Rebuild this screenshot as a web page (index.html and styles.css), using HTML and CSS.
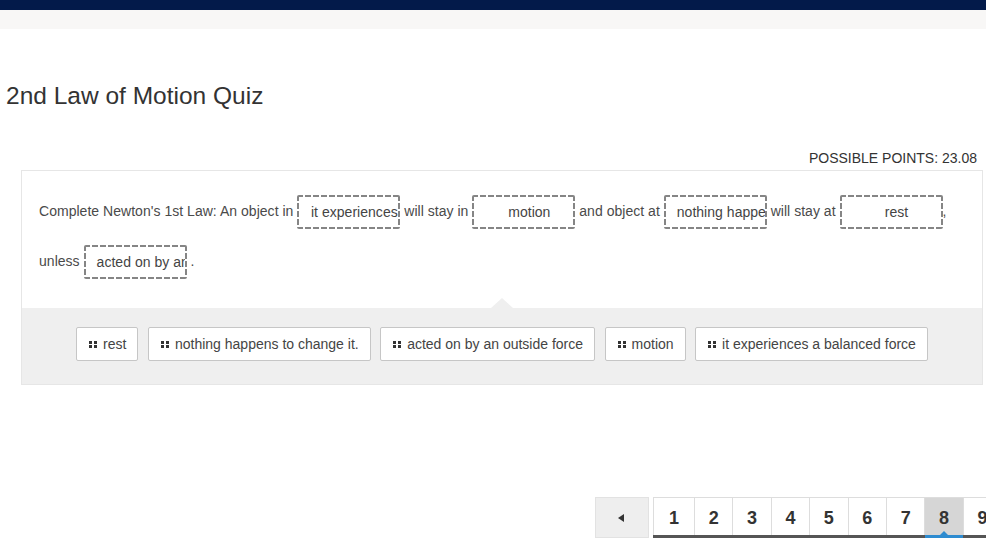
FILE: index.html
```html
<!DOCTYPE html>
<html lang="en">
<head>
<meta charset="utf-8">
<title>2nd Law of Motion Quiz</title>
<link rel="stylesheet" href="styles.css">
</head>
<body>
<div class="topbar"></div>
<div class="subbar"></div>
<main class="page">
  <h1 class="title">2nd Law of Motion Quiz</h1>
  <div class="points">POSSIBLE POINTS: 23.08</div>
  <section class="question">
    <div class="prompt">Complete Newton's 1st Law: An object in <span class="drop">it experiences</span> will stay in <span class="drop">motion</span> and object at <span class="drop">nothing happens to change it.</span> will stay at <span class="drop">rest</span>, unless <span class="drop">acted on by an outside force</span> .</div>
    <div class="bank">
      <div class="chip"><span class="grip"></span>rest</div>
      <div class="chip"><span class="grip"></span>nothing happens to change it.</div>
      <div class="chip"><span class="grip"></span>acted on by an outside force</div>
      <div class="chip"><span class="grip"></span>motion</div>
      <div class="chip"><span class="grip"></span>it experiences a balanced force</div>
    </div>
  </section>
  <nav class="pager">
    <button class="prev" type="button" aria-label="Previous"><span class="prev-arrow"></span></button>
    <ol class="pages">
      <li class="pg">1</li>
      <li class="pg">2</li>
      <li class="pg">3</li>
      <li class="pg">4</li>
      <li class="pg">5</li>
      <li class="pg">6</li>
      <li class="pg">7</li>
      <li class="pg current">8</li>
      <li class="pg">9</li>
      <li class="pg">10</li>
    </ol>
  </nav>
</main>
</body>
</html>
```

FILE: styles.css
```css
html, body {
  margin: 0;
  padding: 0;
  background: #ffffff;
  overflow: hidden;
}
body {
  font-family: "Liberation Sans", Arial, Helvetica, sans-serif;
  color: #333333;
  width: 986px;
}
.topbar {
  height: 10px;
  background: #031a4a;
}
.subbar {
  height: 19px;
  background: #f8f7f6;
}
.page {
  display: block;
}
.title {
  margin: 52px 0 0 0;
  padding-left: 6px;
  font-size: 24.5px;
  line-height: 29px;
  font-weight: normal;
  color: #333333;
}
.points {
  margin-top: 40px;
  padding-right: 9px;
  text-align: right;
  font-size: 14px;
  line-height: 16px;
  color: #333333;
}
.question {
  position: relative;
  margin: 4px 3px 0 21px;
  border: 1px solid #e6e6e6;
  background: #ffffff;
}
.prompt {
  padding: 15px 17px 22px 17px;
  font-size: 14px;
  line-height: 50px;
  letter-spacing: 0.03px;
  color: #4a4a4a;
}
.drop {
  display: inline-block;
  box-sizing: border-box;
  width: 103px;
  height: 34px;
  border: 2px solid transparent;
  border-radius: 2px;
  padding: 0 0 0 11px;
  vertical-align: middle;
  text-align: center;
  white-space: nowrap;
  overflow: hidden;
  line-height: 30px;
  color: #444444;
  background:
    repeating-linear-gradient(90deg, #858585 0 6px, transparent 6px 8px) left top / 100% 2px no-repeat border-box,
    repeating-linear-gradient(90deg, #858585 0 6px, transparent 6px 8px) left bottom / 100% 2px no-repeat border-box,
    repeating-linear-gradient(180deg, #858585 0 6px, transparent 6px 8px) left top / 2px 100% no-repeat border-box,
    repeating-linear-gradient(180deg, #858585 0 6px, transparent 6px 8px) right top / 2px 100% no-repeat border-box,
    #ffffff;
}
.bank {
  position: relative;
  display: flex;
  justify-content: center;
  gap: 9.5px;
  padding: 19px 0 23px 0;
  background: #efefef;
}
.bank::before {
  content: "";
  position: absolute;
  left: 50%;
  top: -10px;
  margin-left: -11px;
  border-left: 11px solid transparent;
  border-right: 11px solid transparent;
  border-bottom: 10px solid #efefef;
}
.chip {
  display: flex;
  align-items: center;
  box-sizing: border-box;
  height: 34px;
  padding: 0 11px 0 12px;
  border: 1px solid #c6c6c6;
  border-radius: 2px;
  background: #ffffff;
  font-size: 14px;
  color: #444444;
  white-space: nowrap;
}
.grip {
  display: inline-block;
  flex: 0 0 8px;
  width: 8px;
  height: 7px;
  margin-right: 6px;
  background:
    linear-gradient(#333333, #333333) 0 0 / 3px 3px no-repeat,
    linear-gradient(#333333, #333333) 5px 0 / 3px 3px no-repeat,
    linear-gradient(#333333, #333333) 0 4px / 3px 3px no-repeat,
    linear-gradient(#333333, #333333) 5px 4px / 3px 3px no-repeat;
}
.pager {
  display: flex;
  align-items: flex-start;
  margin-top: 112px;
  padding-left: 595px;
  white-space: nowrap;
}
.prev {
  display: flex;
  align-items: center;
  justify-content: center;
  box-sizing: border-box;
  flex: 0 0 54px;
  height: 41px;
  margin: 0 4px 0 0;
  padding: 0;
  border: 1px solid #e2e2e2;
  background: #eeeeee;
  cursor: pointer;
}
.prev-arrow {
  display: block;
  width: 0;
  height: 0;
  margin-left: -2px;
  border-top: 4px solid transparent;
  border-bottom: 4px solid transparent;
  border-right: 6px solid #333333;
}
.pages {
  display: flex;
  margin: 0;
  padding: 0;
  list-style: none;
  border-top: 1px solid #dddddd;
  border-bottom: 3px solid #555555;
}
.pg {
  position: relative;
  box-sizing: border-box;
  flex: 0 0 38.4px;
  height: 37px;
  border-left: 1px solid #dddddd;
  text-align: center;
  font-size: 18px;
  font-weight: bold;
  line-height: 40px;
  color: #333333;
  background: #ffffff;
}
.pg:first-child {
  flex-basis: 41px;
}
.pg.current {
  background: #d6d6d6;
}
.pg.current::after {
  content: "";
  position: absolute;
  left: 0;
  right: 0;
  bottom: -3px;
  height: 3px;
  background: #2d8bd0;
}
.pg.current::before {
  content: "";
  position: absolute;
  left: 50%;
  bottom: 0;
  margin-left: -4px;
  border-left: 4px solid transparent;
  border-right: 4px solid transparent;
  border-bottom: 4px solid #2d8bd0;
}
```
